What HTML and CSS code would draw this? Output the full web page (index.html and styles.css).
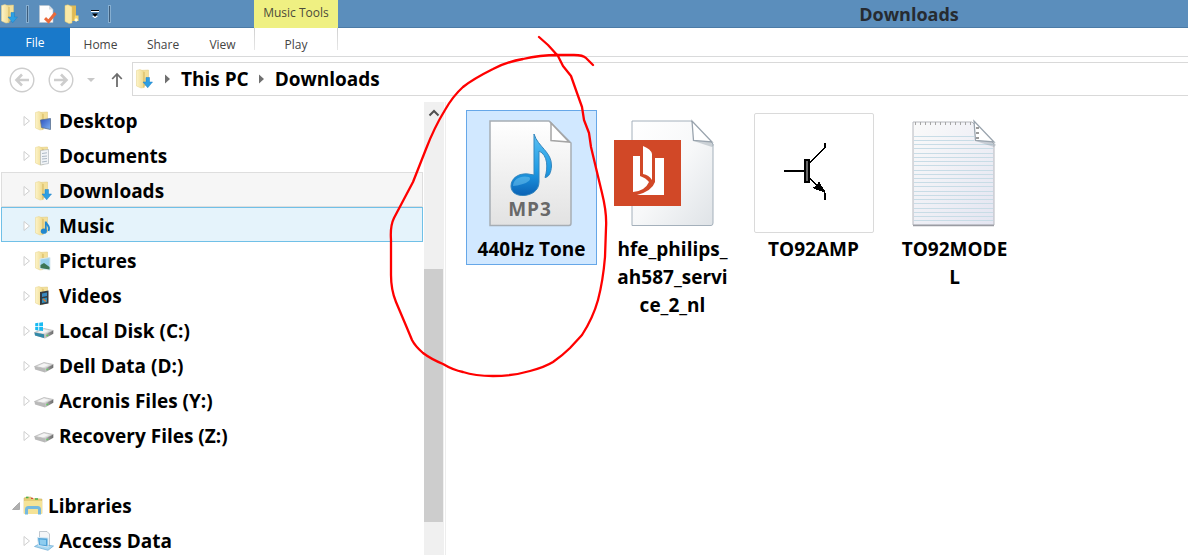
FILE: index.html
```html
<!DOCTYPE html>
<html lang="en">
<head>
    <meta charset="UTF-8">
    <meta name="viewport" content="width=device-width, initial-scale=1.0">
    <title>Downloads</title>
    <link rel="stylesheet" href="styles.css">
</head>
<body>
    <!-- shared icons -->
    <svg class="sprite" aria-hidden="true">
        <defs>
            <linearGradient id="gold" x1="0" x2="1">
                <stop offset="0" stop-color="#fdf4c9"/>
                <stop offset="1" stop-color="#efd98c"/>
            </linearGradient>
            <linearGradient id="paper" x1="0" y1="0" x2="1" y2="1">
                <stop offset="0" stop-color="#ffffff"/>
                <stop offset="0.5" stop-color="#f7f8f9"/>
                <stop offset="1" stop-color="#dfe3e7"/>
            </linearGradient>
            <linearGradient id="grey-paper" x1="0" y1="0" x2="0" y2="1">
                <stop offset="0" stop-color="#ffffff"/>
                <stop offset="1" stop-color="#e2e2e2"/>
            </linearGradient>
            <linearGradient id="lilac-paper" x1="0" y1="0" x2="1" y2="1">
                <stop offset="0" stop-color="#fafafa"/>
                <stop offset="1" stop-color="#e4e5f1"/>
            </linearGradient>
            <linearGradient id="note-blue" x1="0" y1="0" x2="0" y2="1">
                <stop offset="0" stop-color="#5cc0f2"/>
                <stop offset="0.6" stop-color="#1e9be4"/>
                <stop offset="1" stop-color="#0b62b5"/>
            </linearGradient>
            <linearGradient id="screen" x1="0" y1="0" x2="1" y2="1">
                <stop offset="0" stop-color="#2a50c0"/>
                <stop offset="1" stop-color="#7fb2f0"/>
            </linearGradient>
            <linearGradient id="metal" x1="0" x2="1">
                <stop offset="0" stop-color="#c9c9c9"/>
                <stop offset="0.5" stop-color="#8c8c8c"/>
                <stop offset="1" stop-color="#6d6d6d"/>
            </linearGradient>
        </defs>
        <symbol id="folder" viewBox="0 0 20 20">
            <path d="M5 1.5L13.5 1V16L5 17.5Z" fill="#f4e09a" stroke="#dfc67a" stroke-width="0.5"/>
            <path d="M1.500 1.500L5 0.5L9 2.5V18.500L6 19L1.500 17Z" fill="url(#gold)" stroke="#e6d289" stroke-width="0.5"/>
            <path d="M9 3V18.500" stroke="#d2b155" stroke-width="0.8"/>
        </symbol>
        <symbol id="folder-down" viewBox="0 0 20 20">
            <use href="#folder"/>
            <path d="M11 8.500H14.500V13H17.500L12.700 18.800L8 13H11Z" fill="#2d9fe3" stroke="#1c7fc4" stroke-width="0.5"/>
        </symbol>
        <symbol id="expand" viewBox="0 0 8 12">
            <path d="M1 1.5L6.5 6L1 10.5Z" fill="#fff" stroke="#cfcfcf"/>
        </symbol>
        <symbol id="drive" viewBox="0 0 20 20">
            <path d="M0.5 10.500L10 6.500L19.3 8.500L11 12.500Z" fill="#dedede" stroke="#a8a8a8" stroke-width="0.6"/>
            <path d="M3.5 10.3L10 7.500L15 8.800L9 11.500Z" fill="#f5f5f5"/>
            <path d="M0.5 10.500L11 12.500V16.500L1 13.500Z" fill="#b9b9b9"/>
            <path d="M11 12.500L19.3 8.500V11.800L11 16.500Z" fill="url(#metal)"/>
            <path d="M12.5 13.8L14 13" stroke="#55d455" stroke-width="1.4"/>
        </symbol>
        <symbol id="page-fold" viewBox="0 0 120 120">
            <path d="M80.5 27L98 28L101 32L99 34L80.5 28Z" fill="#8f9aa5" opacity="0.4"/>
            <path d="M79 8L80.5 27.500L99 29Z" fill="#fff" stroke="#9aa4ae" stroke-width="1.3"/>
        </symbol>
        <symbol id="crumb-arrow" viewBox="0 0 5 10">
            <path d="M0 0.5L5 5L0 9.500Z" fill="#707070"/>
        </symbol>
    </svg>

    <div class="explorer">
        <header class="titlebar">
            <div class="quick-access">
                <svg class="icon" viewBox="0 0 20 20"><use href="#folder-down"/></svg>
                <span class="divider"></span>
                <button class="quick-button" aria-label="Properties">
                    <svg class="icon" viewBox="0 0 20 20">
                        <path d="M2.5 1.5H12L16 5.5V18.500H2.5Z" fill="#fdfdfd" stroke="#b9c3cd" stroke-width="0.6"/>
                        <path d="M12 1.5V5.5H16Z" fill="#d8dde2"/>
                        <path d="M8 14.2L11.5 17.5L18.500 9" fill="none" stroke="#e9693a" stroke-width="3"/>
                    </svg>
                </button>
                <button class="quick-button" aria-label="New folder">
                    <svg class="icon" viewBox="0 0 20 20">
                        <path d="M6 1.500H14V17H6Z" fill="#e0ba55"/>
                        <path d="M13 11.500H16.5V17H12Z" fill="#f8d870"/>
                        <path d="M3 1.5L6 0.8L10 3V19L7 19.500L3 17.5Z" fill="#fbe9a6" stroke="#e5c96c" stroke-width="0.5"/>
                        <path d="M14 14L16 16L14 18L12.500 16Z" fill="#fffbe0"/>
                    </svg>
                </button>
                <button class="quick-button more" aria-label="Customize Quick Access Toolbar">
                    <svg width="8" height="8" viewBox="0 0 8 8">
                        <path d="M0 0H8V1H0Z" fill="#000"/>
                        <path d="M0 1H8V2H0ZM1 6L4 8.500L7 6Z" fill="#fff"/>
                        <path d="M1 3.500H7L4 7Z" fill="#000"/>
                    </svg>
                </button>
                <span class="divider"></span>
            </div>
            <div class="tool-group">Music Tools</div>
            <h1 class="window-title">Downloads</h1>
        </header>

        <nav class="ribbon" aria-label="Ribbon">
            <button class="tab file-tab">File</button>
            <button class="tab home-tab">Home</button>
            <button class="tab share-tab">Share</button>
            <button class="tab view-tab">View</button>
            <button class="tab play-tab">Play</button>
        </nav>

        <div class="address-row">
            <button class="nav-button" aria-label="Back">
                <svg width="26" height="26" viewBox="0 0 26 26" fill="none" stroke="#cdcdcd">
                    <circle cx="13" cy="13" r="11.8" stroke-width="1.4"/>
                    <path d="M20 13H8M13 7.5L7.5 13L13 18.5" stroke-width="2.6"/>
                </svg>
            </button>
            <button class="nav-button" aria-label="Forward">
                <svg width="26" height="26" viewBox="0 0 26 26" fill="none" stroke="#cdcdcd">
                    <circle cx="13" cy="13" r="11.8" stroke-width="1.4"/>
                    <path d="M6 13H18M13 7.5L18.5 13L13 18.5" stroke-width="2.6"/>
                </svg>
            </button>
            <button class="nav-button" aria-label="Recent locations">
                <svg width="8" height="4" viewBox="0 0 8 4"><path d="M0 0H8L4 4Z" fill="#c8c8c8"/></svg>
            </button>
            <button class="nav-button up" aria-label="Up">
                <svg width="12" height="16" viewBox="0 0 12 16" fill="none" stroke="#6d6d6d" stroke-width="1.8">
                    <path d="M6 15V2M1.2 7L6 2L10.8 7"/>
                </svg>
            </button>
            <div class="address-bar">
                <svg class="icon" viewBox="0 0 20 20"><use href="#folder-down"/></svg>
                <svg class="crumb-arrow"><use href="#crumb-arrow"/></svg>
                <a class="crumb" href="#">This PC</a>
                <svg class="crumb-arrow"><use href="#crumb-arrow"/></svg>
                <a class="crumb" href="#">Downloads</a>
            </div>
        </div>

        <main class="content">
            <nav class="sidebar" aria-label="Folders">
                <ul class="tree">
                    <li><a class="tree-item" href="#">
                        <svg class="expand"><use href="#expand"/></svg>
                        <svg class="icon" viewBox="0 0 20 20"><use href="#folder"/><path d="M6.500 9L16.500 7.5V18.5L7.500 16.5Z" fill="url(#screen)" stroke="#5c718e" stroke-width="0.8"/></svg>
                        Desktop</a></li>
                    <li><a class="tree-item" href="#">
                        <svg class="expand"><use href="#expand"/></svg>
                        <svg class="icon" viewBox="0 0 20 20"><use href="#folder"/><path d="M6.5 4.500L14.5 3.500V17.500L6.5 19Z" fill="#f1f4f7" stroke="#a5adb5" stroke-width="0.6"/><path d="M8 7.500L13 6.8M8 10.500L13 10M8 13L13 12.5M8 16L13 15.2" stroke="#9aa8b8" stroke-width="0.8"/></svg>
                        Documents</a></li>
                    <li><a class="tree-item current" href="#">
                        <svg class="expand"><use href="#expand"/></svg>
                        <svg class="icon" viewBox="0 0 20 20"><use href="#folder-down"/></svg>
                        Downloads</a></li>
                    <li><a class="tree-item hovered" href="#">
                        <svg class="expand"><use href="#expand"/></svg>
                        <svg class="icon" viewBox="0 0 20 20"><use href="#folder"/><ellipse cx="9.8" cy="15.2" rx="3" ry="2.6" fill="#2187cf"/><path d="M11.8 15V5.500C12 9 17 9.5 14.5 15" fill="none" stroke="#2187cf" stroke-width="1.8"/></svg>
                        Music</a></li>
                    <li><a class="tree-item" href="#">
                        <svg class="expand"><use href="#expand"/></svg>
                        <svg class="icon" viewBox="0 0 20 20"><use href="#folder"/><path d="M6 8L16 6.5V19L6 17.5Z" fill="#9ad2ee" stroke="#dce9ef"/><path d="M6.5 14L10 12L15.5 16V18.4L6.5 17Z" fill="#3d7655"/></svg>
                        Pictures</a></li>
                    <li><a class="tree-item" href="#">
                        <svg class="expand"><use href="#expand"/></svg>
                        <svg class="icon" viewBox="0 0 20 20"><use href="#folder"/><path d="M6 6L14.5 4.5V17.5L6 19Z" fill="#333b42"/><path d="M8 7.5L13 6.5V10L8 11Z" fill="#3a8ac0"/><path d="M8 12.5L13 11.5V16L8 17Z" fill="#2c91c1"/><path d="M9 13L12 15.5" stroke="#e1792e" stroke-width="1.5"/></svg>
                        Videos</a></li>
                    <li><a class="tree-item" href="#">
                        <svg class="expand"><use href="#expand"/></svg>
                        <svg class="icon" viewBox="0 0 20 20"><use href="#drive" y="1"/><path d="M0.5 11.500L10 13.3V17L1 14.500Z" fill="#3289a8"/><path d="M1.2 2.2L4.3 1.8V5.2H1.2ZM5.2 1.7L9 1.2V5.2H5.2ZM1.2 6H4.3V9.4L1.2 9ZM5.2 6H9V10L5.2 9.5Z" fill="#19baf2"/></svg>
                        Local Disk (C:)</a></li>
                    <li><a class="tree-item" href="#">
                        <svg class="expand"><use href="#expand"/></svg>
                        <svg class="icon"><use href="#drive"/></svg>
                        Dell Data (D:)</a></li>
                    <li><a class="tree-item" href="#">
                        <svg class="expand"><use href="#expand"/></svg>
                        <svg class="icon"><use href="#drive"/></svg>
                        Acronis Files (Y:)</a></li>
                    <li><a class="tree-item" href="#">
                        <svg class="expand"><use href="#expand"/></svg>
                        <svg class="icon"><use href="#drive"/></svg>
                        Recovery Files (Z:)</a></li>
                </ul>
                <ul class="tree">
                    <li><a class="tree-item root" href="#">
                        <svg class="expand" viewBox="0 0 8 12"><path d="M0.5 9.5H7.5V2.5Z" fill="#b0b0b0" stroke="#8e8e8e" stroke-width="0.6"/></svg>
                        <svg class="icon" viewBox="0 0 20 20">
                            <path d="M1 2L4 1H8L9 2.5L19 3V17.5H1Z" fill="#e6cd78" stroke="#cdb35e" stroke-width="0.5"/>
                            <path d="M3 1.5H5.5M12 3H15" stroke="#48b04a" stroke-width="1.3"/>
                            <path d="M8 2.4H10" stroke="#d54b3d" stroke-width="1.3"/>
                            <path d="M1 5H19V18H1Z" fill="#f5e397"/>
                            <path d="M3.5 18.5V13.5Q3.5 11.5 5.5 11.5H14.5Q16.5 11.5 16.5 13.5V18.5" fill="none" stroke="#75b9df" stroke-width="3"/>
                        </svg>
                        Libraries</a></li>
                    <li><a class="tree-item" href="#">
                        <svg class="expand"><use href="#expand"/></svg>
                        <svg class="icon" viewBox="0 0 20 20">
                            <path d="M5.5 0.5H13L15.5 3V15H5.5Z" fill="#f4f6f8" stroke="#a9b2bb" stroke-width="0.7"/>
                            <path d="M0.5 15.5L5 13L19.5 15L14 19.3Z" fill="#a8d8f2" stroke="#6aa9d2" stroke-width="0.7"/>
                            <path d="M3.5 6.5L14 7V16L4.5 14.500Z" fill="#4fa3d8" stroke="#d8e9f4"/>
                            <path d="M5.5 8.5L12 9V14L6 13.500Z" fill="#8fcdef"/>
                        </svg>
                        Access Data</a></li>
                </ul>
            </nav>

            <div class="scrollbar">
                <svg class="scroll-up" width="12" height="8" viewBox="0 0 12 8"><path d="M1.5 6.5L6 2L10.5 6.5" fill="none" stroke="#505050" stroke-width="2"/></svg>
                <div class="scroll-thumb"></div>
            </div>

            <section class="files" aria-label="Files">
                <a class="file selected" href="#">
                    <svg class="file-icon" viewBox="0 0 120 120">
                        <path d="M18 8H77L99 30V110Q99 112.500 97 112.500H18Z" fill="url(#grey-paper)" stroke="#a6adb4" stroke-width="1.500"/>
                        <path d="M79 10V27.500L97 29Z" fill="#fff" stroke="#a5a5a5" stroke-width="1.500"/>
                        <path d="M62 21C66 34 80 39 79.500 53C79 60 77 64 73 64.500C76 55 76 42 67 38V69C67 78 59 82 52 82.500C44 83 39 79 39 73C39 65 47 60 56 61L62 62Z" fill="url(#note-blue)" stroke="#3386be"/>
                        <path d="M41 73C41 66 49 62 57 64C61 67 53 72 41 73Z" fill="#7fd0f7" opacity="0.450"/>
                        <text class="type-label" x="58" y="103" text-anchor="middle">MP3</text>
                    </svg>
                    <span class="file-name">440Hz Tone</span>
                </a>
                <a class="file" href="#">
                    <svg class="file-icon" viewBox="0 0 120 120">
                        <path d="M19 8H78L100 31V110Q100 112.500 98 112.500H19Z" fill="url(#paper)" stroke="#a4b0bb"/>
                        <use href="#page-fold"/>
                        <path d="M1 27H68V93H1Z" fill="#d14827"/>
                        <path d="M20 43H27V63Q33 65 36 69Q32 78 20 79Z" fill="#fff"/>
                        <path d="M30 33Q38 36 39 41V67Q36 62 30 61Z" fill="#fff"/>
                        <path d="M42 45H51V82H24Q39 78 42 69Z" fill="#fff"/>
                    </svg>
                    <span class="file-name">hfe_philips_<wbr>ah587_servi<wbr>ce_2_nl</span>
                </a>
                <a class="file" href="#">
                    <svg class="file-icon framed" viewBox="0 0 120 120" shape-rendering="crispEdges">
                        <path d="M29 58H51M71 29V35M71 80V87" stroke="#000" stroke-width="2"/>
                        <path d="M55 50L71 34M55 65L71 80" stroke="#000" stroke-width="1.200"/>
                        <path d="M51 47H55V69H51Z" fill="#666" stroke="#000" stroke-width="1.500"/>
                        <path d="M65 69L67 73L71 79L64 77L59 75L63 73Z" fill="#000" stroke="#000"/>
                    </svg>
                    <span class="file-name">TO92AMP</span>
                </a>
                <a class="file" href="#">
                    <svg class="file-icon" viewBox="0 0 120 120">
                        <path d="M18 9H77L99 31V112H18Z" fill="url(#lilac-paper)" stroke="#b5b7bd"/>
                        <path d="M18 112.500H99" stroke="#9a9ca3" stroke-width="1.500"/>
                        <path d="M20 10.500H77" stroke="#a5a5a5" stroke-width="3" stroke-dasharray="1 4"/>
                        <path d="M19 23.500H79M19 27.500H79M19 31.500H98M19 35.500H98M19 40.500H98M19 44.500H98M19 48.500H98M19 52.500H98M19 57.500H98M19 61.500H98M19 65.500H98M19 69.500H98M19 73.500H98M19 78.500H98M19 82.500H98M19 86.500H98M19 90.500H98M19 95.500H98M19 99.500H98M19 103.500H98M19 107.500H98" stroke="#c8dce6"/>
                        <use href="#page-fold"/>
                        <path d="M82.500 14V26" stroke="#9b9b9b" stroke-width="3" stroke-dasharray="2 3"/>
                    </svg>
                    <span class="file-name">TO92MODE<br>L</span>
                </a>
            </section>
        </main>

        <!-- hand drawn ring around the selected file -->
        <svg class="marker" width="620" height="390" viewBox="0 0 620 390" aria-hidden="true">
            <path d="M539 37L548 45L558 56L563 66L571 76L577 93L582 107L584 120L589 133L591 147L596 168L602 193Q607 213 606 228L605 257Q603 281 598 300Q593 318 582 335L570 348Q563 355 553 362Q545 367 530 371Q513 376 493 376Q475 376 463 372Q453 370 443 364Q431 359 423 353Q415 346 412 340L407 328L396 302Q391 290 391 275V240Q390 226 394 218L413 182L426 149Q434 128 445 110Q453 96 463 87Q473 79 493 69Q506 62 523 59Q540 55 558 55H574Q583 55 586 58L593 65" fill="none" stroke="#f00" stroke-width="2.300" stroke-linecap="round" stroke-linejoin="round"/>
        </svg>
    </div>
</body>
</html>
```

FILE: styles.css
```css
* {
    box-sizing: border-box;
}

body {
    margin: 0;
    background-color: #fff;
    color: #000;
    font-family: 'Open Sans', 'Noto Sans', sans-serif;
    font-size: 19px;
    font-weight: 700;
}

button {
    padding: 0;
    border: none;
    background: none;
    font: inherit;
    cursor: pointer;
}

a {
    color: inherit;
    text-decoration: none;
}

svg {
    display: block;
    flex-shrink: 0;
}

.sprite {
    position: absolute;
    width: 0;
    height: 0;
}

.explorer {
    position: relative;
    display: flex;
    flex-direction: column;
    height: 100vh;
    overflow: hidden;
}

.icon {
    width: 20px;
    height: 20px;
}

/* title bar */
.titlebar {
    display: grid;
    grid-template-columns: 254px 84px 1fr;
    height: 28px;
    flex-shrink: 0;
    background-color: #5b8ebc;
    box-shadow: inset 0 -1px #4c7ba6;
}

.quick-access {
    display: flex;
    align-items: center;
    gap: 5px;
}

.divider {
    width: 3px;
    height: 18px;
    margin: 0 3px 0 1px;
    border: 1px solid #86aed0;
    background-color: #3e5e7c;
}

.more {
    width: 15px;
    display: flex;
    justify-content: center;
}

.tool-group {
    background-color: #eff082;
    color: #4b4b3b;
    font-size: 12px;
    font-weight: 400;
    line-height: 26px;
    text-align: center;
}

.window-title {
    margin: 0;
    padding-left: 292px;
    color: #262b31;
    font-size: 18px;
    line-height: 28px;
    text-align: center;
}

/* ribbon */
.ribbon {
    display: flex;
    height: 29px;
    flex-shrink: 0;
    border-bottom: 1px solid #d9dadb;
}

.tab {
    color: #444;
    font-size: 12px;
    font-weight: 400;
    line-height: 34px;
}

.file-tab {
    width: 70px;
    background-color: #1979ca;
    color: #fff;
    line-height: 30px;
}

.home-tab {
    width: 61px;
}

.share-tab {
    width: 64px;
}

.view-tab {
    width: 55px;
    margin-right: 4px;
}

.play-tab {
    width: 84px;
    height: 22px;
    border: solid transparent;
    border-width: 0 1px;
    border-image: linear-gradient(#cfcfcf, #e8e8e8) 1;
}

/* address bar */
.address-row {
    display: flex;
    align-items: center;
    height: 45px;
    flex-shrink: 0;
    padding-left: 9px;
}

.nav-button {
    margin-right: 13px;
}

.nav-button.up {
    margin: 0 9px 0 3px;
}

.address-bar {
    display: flex;
    align-items: center;
    flex: 1;
    height: 34px;
    margin-bottom: 1px;
    padding-left: 2px;
    border: 1px solid #d9d9d9;
    border-right: none;
}

.crumb-arrow {
    width: 5px;
    height: 10px;
    margin: 0 11px 0 10px;
}

/* folder tree */
.content {
    display: flex;
    flex: 1;
    min-height: 0;
}

.sidebar {
    width: 423px;
    flex-shrink: 0;
    padding-left: 1px;
}

.tree {
    margin: 0 0 35px;
    padding: 0;
    list-style: none;
}

.tree-item {
    display: flex;
    align-items: center;
    height: 35px;
    padding-top: 2px;
    padding-left: 21px;
    border: 1px solid transparent;
}

.tree-item.root {
    padding-left: 10px;
}

.tree-item.current {
    border-color: #dedede;
    background-color: #f6f6f6;
}

.tree-item.hovered {
    border-color: #70c0e7;
    background-color: #e5f3fb;
}

.expand {
    width: 8px;
    height: 12px;
    margin-right: 3px;
}

.tree-item .icon {
    margin-right: 5px;
}

/* scrollbar */
.scrollbar {
    display: flex;
    flex-direction: column;
    width: 20px;
    margin: 0 1px;
    background-color: #f0f0f0;
}

.scroll-up {
    margin: 7px 4px 152px;
}

.scroll-thumb {
    width: 19px;
    height: 253px;
    background-color: #cdcdcd;
}

/* files */
.files {
    display: flex;
    flex: 1;
    flex-wrap: wrap;
    align-items: flex-start;
    align-content: flex-start;
    gap: 10px;
    padding: 8px 20px;
    border-left: 1px solid #ededed;
}

.file {
    display: flex;
    flex-direction: column;
    align-items: center;
    width: 131px;
    padding: 2px 1px 1px;
    border: 1px solid transparent;
}

.file.selected {
    border-color: #66a7e8;
    background-color: #d1e8ff;
}

.file-icon {
    width: 120px;
    height: 120px;
}

.framed {
    border: 1px solid #dadada;
    border-radius: 2px;
}

.type-label {
    fill: #696969;
    font-size: 19px;
    letter-spacing: 1px;
}

.file-name {
    margin-top: 2px;
    line-height: 28px;
    text-align: center;
}

/* drawn over the window */
.marker {
    position: absolute;
    top: 0;
    left: 0;
    pointer-events: none;
}
```
